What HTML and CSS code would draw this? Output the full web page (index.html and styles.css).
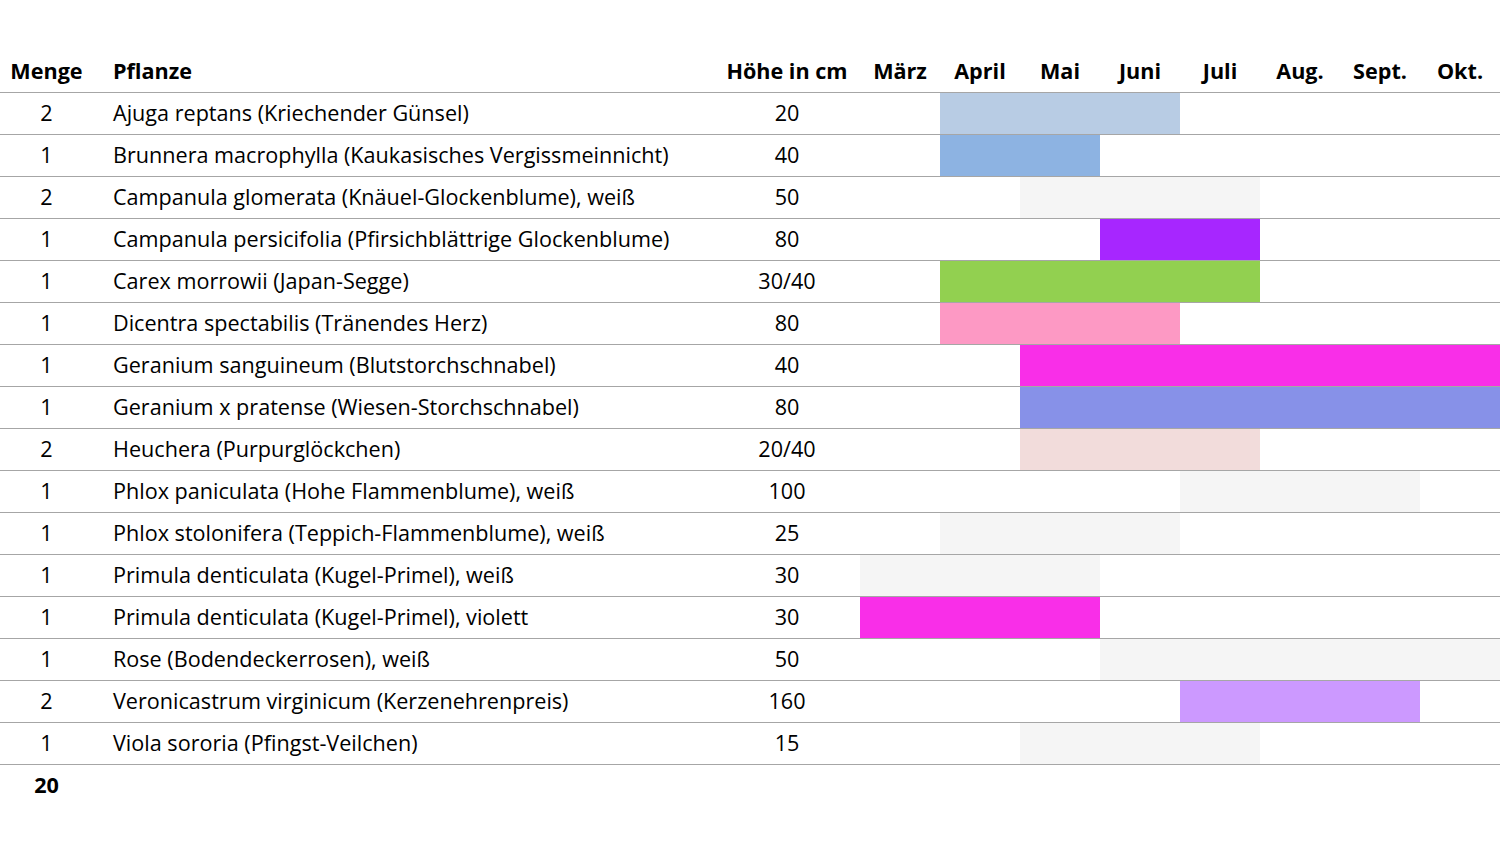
FILE: index.html
```html
<!DOCTYPE html>
<html lang="de">
<head>
<meta charset="utf-8">
<title>Pflanzenliste</title>
<link rel="stylesheet" href="styles.css">
</head>
<body>
<div class="table">
  <div class="row head">
    <div class="c qty">Menge</div>
    <div class="c name">Pflanze</div>
    <div class="c hgt">Höhe in cm</div>
    <div class="c mon m1">März</div>
    <div class="c mon m2">April</div>
    <div class="c mon m3">Mai</div>
    <div class="c mon m4">Juni</div>
    <div class="c mon m5">Juli</div>
    <div class="c mon m6">Aug.</div>
    <div class="c mon m7">Sept.</div>
    <div class="c mon m8">Okt.</div>
  </div>
  <div class="row"><div class="bar f2 t4 lightblue"></div><div class="c qty">2</div><div class="c name">Ajuga reptans (Kriechender Günsel)</div><div class="c hgt">20</div></div>
  <div class="row"><div class="bar f2 t3 blue"></div><div class="c qty">1</div><div class="c name">Brunnera macrophylla (Kaukasisches Vergissmeinnicht)</div><div class="c hgt">40</div></div>
  <div class="row"><div class="bar f3 t5 white"></div><div class="c qty">2</div><div class="c name">Campanula glomerata (Knäuel-Glockenblume), weiß</div><div class="c hgt">50</div></div>
  <div class="row"><div class="bar f4 t5 purple"></div><div class="c qty">1</div><div class="c name">Campanula persicifolia (Pfirsichblättrige Glockenblume)</div><div class="c hgt">80</div></div>
  <div class="row"><div class="bar f2 t5 green"></div><div class="c qty">1</div><div class="c name">Carex morrowii (Japan-Segge)</div><div class="c hgt">30/40</div></div>
  <div class="row"><div class="bar f2 t4 pink"></div><div class="c qty">1</div><div class="c name">Dicentra spectabilis (Tränendes Herz)</div><div class="c hgt">80</div></div>
  <div class="row"><div class="bar f3 t8 magenta"></div><div class="c qty">1</div><div class="c name">Geranium sanguineum (Blutstorchschnabel)</div><div class="c hgt">40</div></div>
  <div class="row"><div class="bar f3 t8 violet"></div><div class="c qty">1</div><div class="c name">Geranium x pratense (Wiesen-Storchschnabel)</div><div class="c hgt">80</div></div>
  <div class="row"><div class="bar f3 t5 rose"></div><div class="c qty">2</div><div class="c name">Heuchera (Purpurglöckchen)</div><div class="c hgt">20/40</div></div>
  <div class="row"><div class="bar f5 t7 white"></div><div class="c qty">1</div><div class="c name">Phlox paniculata (Hohe Flammenblume), weiß</div><div class="c hgt">100</div></div>
  <div class="row"><div class="bar f2 t4 white"></div><div class="c qty">1</div><div class="c name">Phlox stolonifera (Teppich-Flammenblume), weiß</div><div class="c hgt">25</div></div>
  <div class="row"><div class="bar f1 t3 white"></div><div class="c qty">1</div><div class="c name">Primula denticulata (Kugel-Primel), weiß</div><div class="c hgt">30</div></div>
  <div class="row"><div class="bar f1 t3 magenta"></div><div class="c qty">1</div><div class="c name">Primula denticulata (Kugel-Primel), violett</div><div class="c hgt">30</div></div>
  <div class="row"><div class="bar f4 t8 white"></div><div class="c qty">1</div><div class="c name">Rose (Bodendeckerrosen), weiß</div><div class="c hgt">50</div></div>
  <div class="row"><div class="bar f5 t7 lavender"></div><div class="c qty">2</div><div class="c name">Veronicastrum virginicum (Kerzenehrenpreis)</div><div class="c hgt">160</div></div>
  <div class="row"><div class="bar f3 t5 white"></div><div class="c qty">1</div><div class="c name">Viola sororia (Pfingst-Veilchen)</div><div class="c hgt">15</div></div>
  <div class="row total"><div class="c qty">20</div></div>
</div>
</body>
</html>
```

FILE: styles.css
```css
html, body {
  margin: 0;
  padding: 0;
  background: #ffffff;
}

body {
  font-family: "Open Sans", "Liberation Sans", sans-serif;
  font-size: 21.6px;
  color: #000000;
}

.table {
  padding-top: 51px;
  width: 1500px;
}

.row {
  display: grid;
  grid-template-columns: 93px 621px 146px repeat(8, 80px);
  grid-template-rows: 41px;
  border-bottom: 1px solid #a6a6a6;
}

.row.total {
  border-bottom: none;
}

.head .c,
.total .c {
  font-weight: 700;
}

.c {
  grid-row: 1;
  align-self: center;
  white-space: nowrap;
  line-height: 1;
  position: relative;
  top: -1px;
}

.qty { grid-column: 1; text-align: center; }
.name { grid-column: 2; padding-left: 20px; }
.hgt { grid-column: 3; text-align: center; }
.mon { text-align: center; }

.m1 { grid-column: 4; }
.m2 { grid-column: 5; }
.m3 { grid-column: 6; }
.m4 { grid-column: 7; }
.m5 { grid-column: 8; }
.m6 { grid-column: 9; }
.m7 { grid-column: 10; }
.m8 { grid-column: 11; }

.bar {
  grid-row: 1;
  align-self: stretch;
}

.f1 { grid-column-start: 4; }
.f2 { grid-column-start: 5; }
.f3 { grid-column-start: 6; }
.f4 { grid-column-start: 7; }
.f5 { grid-column-start: 8; }

.t3 { grid-column-end: 7; }
.t4 { grid-column-end: 8; }
.t5 { grid-column-end: 9; }
.t7 { grid-column-end: 11; }
.t8 { grid-column-end: 12; }

.lightblue { background: #b8cce4; }
.blue { background: #8db3e2; }
.white { background: #f5f5f5; }
.purple { background: #a726ff; }
.green { background: #92d050; }
.pink { background: #fd99c4; }
.magenta { background: #f92ee8; }
.violet { background: #8791e8; }
.rose { background: #f2dcdb; }
.lavender { background: #cc99ff; }
```
